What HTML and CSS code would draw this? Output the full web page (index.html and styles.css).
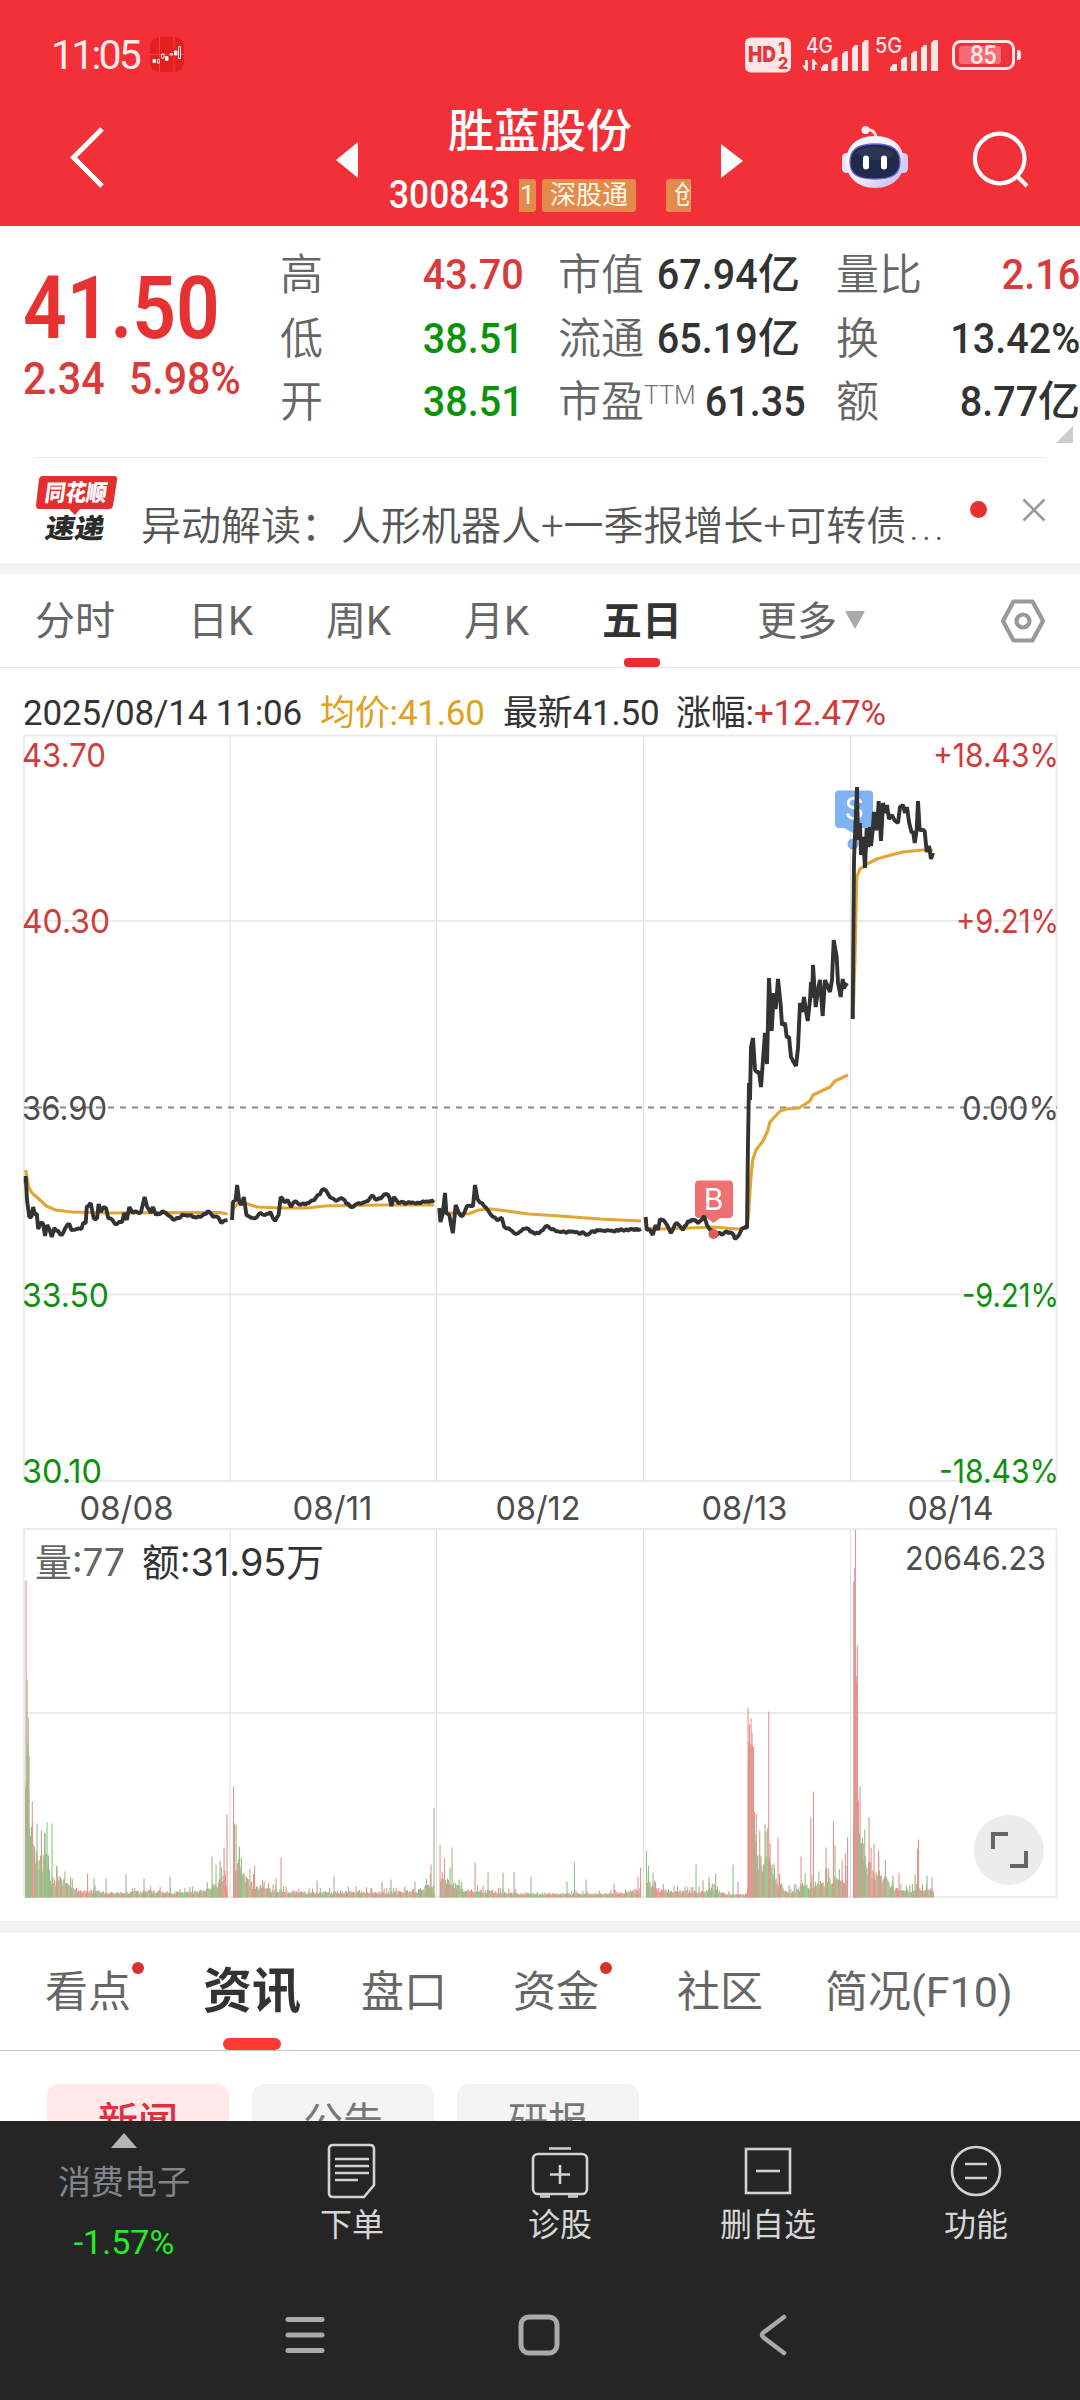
FILE: index.html
```html
<!DOCTYPE html>
<html lang="zh-CN">
<head>
<meta charset="UTF-8" />
<meta name="viewport" content="width=device-width, initial-scale=1" />
<title>胜蓝股份 300843</title>
<link rel="stylesheet" href="styles.css">
</head>
<body>

<header class="header">
  <div class="status">
    <span class="clock">11:05</span>
    <svg class="app-icon" width="34" height="35" viewBox="0 0 34 35">
      <rect width="34" height="35" rx="9" fill="#e3201f" />
      <path d="M9.500 0V35M0 17.500H34M24 0V35" stroke="#ef4a45" stroke-width="0.800" />
      <g fill="#fff" stroke="#fff" stroke-width="0.900">
        <path d="M3 22.500h2.500v3H3zM15.500 19.500h2.500v4h-2.500zM24.500 14h2.500v4h-2.500z" />
        <path d="M7.500 22.500h2v3.500h-2zM11.500 17h2.500v4h-2.500zM20 16.500h2.500v1.500H20zM28.500 9.500h2v12h-2z" fill="none" />
      </g>
    </svg>
    <svg class="signals" width="282" height="40" viewBox="742 34 282 40">
      <rect x="745" y="37.500" width="46" height="35" rx="6" fill="#ffe6e6" />
      <text x="748" y="62" class="hd" textLength="28" lengthAdjust="spacingAndGlyphs">HD</text>
      <text x="778" y="53.500" class="hd-small">1</text>
      <text x="778" y="68.500" class="hd-small">2</text>
      <g fill="#ffe6e6">
        <text x="806" y="53" class="net" textLength="27" lengthAdjust="spacingAndGlyphs">4G</text>
        <text x="875" y="53" class="net" textLength="27" lengthAdjust="spacingAndGlyphs">5G</text>
        <path d="M808 60v11h-1.500l-4.500-5.500h3V60zM812 70V59h1.500l4.500 5.500h-3V70z" />
        <path d="M821 71v-3l3-4h4v7zM831.500 71V60l4-3h2v14zM842 71V54l3-3h3v20zM852 71V48l3-3h3v26zM862 71V43l3-3h3.500v31z" />
        <path d="M890 71v-3l3-4h4v7zM901 71V60l3-3h3v14zM911 71V54l3-3h3v20zM921 71V48l3-3h3v26zM931 71V43l3-3h4v31z" />
        <path d="M1017 50h1.500q2.500 0 2.500 3v4q0 3-2.500 3H1017z" />
      </g>
      <rect x="953.500" y="41.500" width="60" height="27" rx="7" fill="none" stroke="#ffe6e6" stroke-width="3" />
      <rect x="959" y="46" width="42" height="18" rx="3" fill="#f66c72" />
      <text x="970" y="64" class="battery" textLength="27" lengthAdjust="spacingAndGlyphs">85</text>
    </svg>
  </div>
  <div class="nav">
    <svg class="back" width="40" height="66" viewBox="66 126 40 66"><path d="M101 131L72.500 159.500L101 188" fill="none" stroke="#fff" stroke-width="5" /></svg>
    <svg class="prev" width="22" height="36" viewBox="0 0 22 36"><path d="M22 0V36L0 18z" fill="#fff" /></svg>
    <div class="title">
      <h1>胜蓝股份</h1>
      <div class="code-row">
        <span class="code">300843</span>
        <div class="tags">
          <span class="tag cut-left">1</span>
          <span class="tag">深股通</span>
          <span class="tag cut-right">创</span>
        </div>
      </div>
    </div>
    <svg class="next" width="22" height="34" viewBox="0 0 22 34"><path d="M0 0V34L22 17z" fill="#fff" /></svg>
    <svg class="robot" width="70" height="66" viewBox="0 0 70 66">
      <defs>
        <linearGradient id="shell" x1="0" y1="0" x2="1" y2="1">
          <stop offset="0" stop-color="#fff" /><stop offset="0.500" stop-color="#f3effc" /><stop offset="1" stop-color="#bdb6e8" />
        </linearGradient>
      </defs>
      <path d="M25 6Q35 4 36 14" fill="none" stroke="#fbdde4" stroke-width="3" />
      <circle cx="25.500" cy="6" r="4" fill="#fbe9ef" />
      <rect x="2" y="29" width="9" height="20" rx="4.500" fill="#e9e4f8" />
      <rect x="58" y="29" width="10" height="20" rx="4.500" fill="#d4cdf2" />
      <path d="M35 12C55 12 64 24 64 38S53 64 35 64S6 52 6 38S15 12 35 12z" fill="url(#shell)" />
      <path d="M35 20C53 20 60 26 60 38S53 55 35 55S10 50 10 38S17 20 35 20z" fill="#202b4b" stroke="#6f62dd" stroke-width="1.300" />
      <path d="M16 29Q22 23 35 23.500Q50 24 54 30Q48 37 34 36Q24 35 16 29z" fill="#36405e" opacity="0.600" />
      <rect x="23" y="31.500" width="6" height="14" rx="3" fill="#fff" />
      <rect x="41" y="31.500" width="6" height="14" rx="3" fill="#fff" />
    </svg>
    <svg class="search" width="60" height="62" viewBox="970 130 60 62"><g fill="none" stroke="#fff" stroke-width="4.200"><circle cx="999.700" cy="160.500" r="24.800" /><path d="M1017 178l10 10" /></g></svg>
  </div>
</header>

<section class="quote">
  <div class="price">
    <div class="last"><span>41.50</span></div>
    <div class="change"><span>2.34</span><span>5.98%</span></div>
  </div>
  <dl class="col col-a">
    <div><dt>高</dt><dd class="up"><span class="num">43.70</span></dd></div>
    <div><dt>低</dt><dd class="down"><span class="num">38.51</span></dd></div>
    <div><dt>开</dt><dd class="down"><span class="num">38.51</span></dd></div>
  </dl>
  <dl class="col col-b">
    <div><dt>市值</dt><dd><span class="num">67.94</span>亿</dd></div>
    <div><dt>流通</dt><dd><span class="num">65.19</span>亿</dd></div>
    <div><dt>市盈<sup>TTM</sup></dt><dd><span class="num">61.35</span></dd></div>
  </dl>
  <dl class="col col-c">
    <div><dt>量比</dt><dd class="up"><span class="num">2.16</span></dd></div>
    <div><dt>换</dt><dd><span class="num">13.42%</span></dd></div>
    <div><dt>额</dt><dd><span class="num">8.77</span>亿</dd></div>
  </dl>
  <i class="corner"></i>
</section>

<section class="news">
  <svg class="logo" width="82" height="68" viewBox="36 476 82 68">
    <path d="M42 477H114q4 0 3 4L113 507q-1 3-4 3H80l-5 6l-6-6H39q-3 0-3-4L39 480q1-3 3-3z" fill="#e32f2f" />
    <text class="logo-top" transform="translate(44 502) skewX(-8)" textLength="62" lengthAdjust="spacingAndGlyphs">同花顺</text>
    <text class="logo-bottom" transform="translate(44 539) skewX(-10)" textLength="59" lengthAdjust="spacingAndGlyphs">速递</text>
  </svg>
  <p>异动解读：人形机器人+一季报增长+可转债<span class="more-dots">...</span></p>
  <i class="dot"></i>
  <svg class="close" width="24" height="24" viewBox="0 0 24 24"><path d="M1.500 1.500L22.500 22.500M22.500 1.500L1.500 22.500" stroke="#999" stroke-width="2.600" /></svg>
</section>

<nav class="periods">
  <a>分时</a><a>日K</a><a>周K</a><a>月K</a><a class="active">五日</a><a class="more">更多<i></i></a>
  <svg class="settings" width="46" height="44" viewBox="0 0 46 44"><g fill="none" stroke="#999" stroke-width="4.200"><path d="M13.500 2.500H32.500L43 22L32.500 41.500H13.500L3 22z" stroke-linejoin="round" /><circle cx="23" cy="22" r="6.500" /></g></svg>
</nav>

<section class="chart">
  <div class="readout">
    <span class="r-date">2025/08/14 11:06</span>
    <span class="r-avg">均价:41.60</span>
    <span class="r-last">最新41.50</span>
    <span class="r-chg">涨幅:<b>+12.47%</b></span>
  </div>
  <svg class="plot" width="1080" height="1187" viewBox="0 734 1080 1187">
    <g class="grid">
      <path d="M24 735.500H1057M24 921H1057M24 1294.500H1057M24 1481H1057M24 1529H1057M24 1713H1057M24 1897H1057" />
      <path d="M24 735V1481M1056.500 735V1481M24 1529V1897M1056.500 1529V1897" />
      <path class="thin" d="M230 735V1481M436.500 735V1481M643.500 735V1481M850.500 735V1481M230 1529V1897M436.500 1529V1897M643.500 1529V1897M850.500 1529V1897" />
    </g>
    <path d="M24 1107.500H1057" stroke="#8a8a8a" stroke-width="2" stroke-dasharray="6 6" />
    <g id="volume"></g>
    <g class="axis">
      <text x="22" y="767" class="up" textLength="84" lengthAdjust="spacingAndGlyphs">43.70</text>
      <text x="22" y="933" class="up" textLength="88" lengthAdjust="spacingAndGlyphs">40.30</text>
      <text x="22" y="1120" textLength="85" lengthAdjust="spacingAndGlyphs">36.90</text>
      <text x="22" y="1307" class="down" textLength="87" lengthAdjust="spacingAndGlyphs">33.50</text>
      <text x="22" y="1483" class="down" textLength="80" lengthAdjust="spacingAndGlyphs">30.10</text>
      <text x="933" y="767" class="up" textLength="126" lengthAdjust="spacingAndGlyphs">+18.43%</text>
      <text x="956" y="933" class="up" textLength="103" lengthAdjust="spacingAndGlyphs">+9.21%</text>
      <text x="962" y="1120" textLength="97" lengthAdjust="spacingAndGlyphs">0.00%</text>
      <text x="962" y="1307" class="down" textLength="97" lengthAdjust="spacingAndGlyphs">-9.21%</text>
      <text x="939" y="1483" class="down" textLength="120" lengthAdjust="spacingAndGlyphs">-18.43%</text>
      <text x="79.500" y="1520" textLength="94" lengthAdjust="spacingAndGlyphs">08/08</text>
      <text x="292.500" y="1520" textLength="80" lengthAdjust="spacingAndGlyphs">08/11</text>
      <text x="495.500" y="1520" textLength="85" lengthAdjust="spacingAndGlyphs">08/12</text>
      <text x="701.500" y="1520" textLength="86" lengthAdjust="spacingAndGlyphs">08/13</text>
      <text x="907.500" y="1520" textLength="86" lengthAdjust="spacingAndGlyphs">08/14</text>
      <text x="905" y="1570" textLength="141" lengthAdjust="spacingAndGlyphs">20646.23</text>
    </g>
    <g class="vol-text">
      <text x="35" y="1576" fill="#666" textLength="90" lengthAdjust="spacingAndGlyphs">量:77</text>
      <text x="142" y="1576" fill="#333" textLength="182" lengthAdjust="spacingAndGlyphs">额:31.95万</text>
    </g>
    <g class="marker sell">
      <path d="M839 790.500H869q4 0 4 4V824q0 4-4 4H861L853 833L844 828H839q-4 0-4-4V794.500q0-4 4-4z" />
      <circle cx="853" cy="844" r="5.500" />
      <text x="854" y="819">S</text>
    </g>
    <g class="marker buy">
      <path d="M699 1180.500H729q4 0 4 4V1214q0 4-4 4H720L713.500 1223L707 1218H699q-4 0-4-4V1184.500q0-4 4-4z" />
      <text x="713.500" y="1210">B</text>
    </g>
    <g id="lines"></g>
    <circle cx="713.500" cy="1234" r="5" fill="#e05a5a" />
    <circle cx="1008.700" cy="1850" r="35" fill="#ececec" />
    <path d="M993 1849V1834H1008M1026 1851V1866H1010" fill="none" stroke="#666" stroke-width="4" />
  </svg>
</section>

<nav class="sections">
  <a>看点<i></i></a><a class="active">资讯</a><a>盘口</a><a>资金<i></i></a><a>社区</a><a>简况(F10)</a>
</nav>

<section class="chips">
  <span class="chip on">新闻</span><span class="chip">公告</span><span class="chip">研报</span>
</section>

<footer class="bottom">
  <div class="toolbar">
    <div class="tool sector">
      <svg width="26" height="15" viewBox="0 0 26 15"><path d="M13 0L26 15H0z" fill="#b5b5b5" /></svg>
      <span class="sector-name">消费电子</span>
      <span class="sector-chg">-1.57%</span>
    </div>
    <div class="tool">
      <svg width="60" height="56" viewBox="0 0 60 56"><g fill="none" stroke="#d2d2d2" stroke-width="2.600"><path d="M11 2H48q4 0 4 4V42L42 54H11q-4 0-4-4V6q0-4 4-4z" /><path d="M13 16H47M13 23H47M13 30H47M13 37H36" /></g></svg>
      <span>下单</span>
    </div>
    <div class="tool">
      <svg width="60" height="56" viewBox="0 0 60 56"><g fill="none" stroke="#d2d2d2" stroke-width="2.600"><rect x="3" y="11" width="54" height="40" rx="5" /><path d="M19 5.500H41M30 22V41M20 31.500H40M10 53.500H20M38 53.500H48" /></g></svg>
      <span>诊股</span>
    </div>
    <div class="tool">
      <svg width="60" height="56" viewBox="0 0 60 56"><g fill="none" stroke="#d2d2d2" stroke-width="2.600"><rect x="8" y="6" width="44" height="44" /><path d="M18 28H42" /></g></svg>
      <span>删自选</span>
    </div>
    <div class="tool">
      <svg width="60" height="56" viewBox="0 0 60 56"><g fill="none" stroke="#d2d2d2" stroke-width="2.600"><circle cx="30" cy="28" r="24" /><path d="M19 21H41M19 35H41" /></g></svg>
      <span>功能</span>
    </div>
  </div>
  <div class="sysnav">
    <svg width="42" height="42" viewBox="0 0 42 42"><path d="M4 5.500H38M4 21H38M4 36.500H38" stroke="#aaa" stroke-width="5" stroke-linecap="round" /></svg>
    <svg width="42" height="42" viewBox="0 0 42 42"><rect x="3" y="3" width="36" height="36" rx="8" fill="none" stroke="#aaa" stroke-width="5" /></svg>
    <svg width="42" height="42" viewBox="0 0 42 42"><path d="M32 3L11.500 18.500Q8.500 21 11.500 23.500L32 39" fill="none" stroke="#aaa" stroke-width="4.500" stroke-linecap="round" /></svg>
  </div>
</footer>

<script>
  const NS = 'http://www.w3.org/2000/svg';
  const lines = document.getElementById('lines');
  const volume = document.getElementById('volume');

  // one string per trading day
  const avgDays = [
    '25.7,1170 28.6,1187 32,1193 40,1200 46.4,1206 55.4,1210 71.4,1212 107,1213 178.6,1212.7 221,1212.7 227.5,1214',
    '232,1210 237.5,1204 244.6,1203 257,1207 282,1208 307,1208 325,1206 378.6,1205 434,1205',
    '439,1213 452,1213 468,1214 478.6,1210 491,1209 507,1211 528.6,1214 560,1216 600,1219 641,1221',
    '646,1228 660,1229 690,1228 713,1227 737,1229 747,1228 748.7,1213 750.7,1180 752.7,1160 756,1150 763,1141 768,1130 770,1122 780,1111 786.7,1109 799,1108 810,1101 813,1095 830,1087 835,1081 848,1075',
    '853,1019 855,957 856.7,877 860,869 867,864 877,859 887,856 903,852 923,850 933,850'
  ];
  const priceDays = [
    '25.7,1183 25.7,1176 27,1200 29.3,1217 31.4,1217 33.2,1207 34.6,1214 36.8,1214 38.2,1229 40.4,1223 42.9,1223 45,1236 47.1,1225 51.8,1237 54.3,1228 58.2,1231 61.8,1235 65.4,1228 69.3,1224 71.4,1230 76.8,1229 81.4,1229 83.2,1223 85.7,1223 86.8,1207 90.7,1203 93.6,1218 97.1,1218 98.6,1204 100.7,1212 103.6,1207 106,1208 108.2,1218 112.5,1220 115,1224 118.9,1222 122.1,1222 124.3,1213 126.8,1220 129.3,1207 132.9,1213 141,1212 144.6,1197 147.1,1207 150.7,1213 152.9,1207 156,1215 162.5,1211 167.9,1215 173.2,1220 178.6,1218 183.9,1215 192.9,1217 200,1217 207.9,1211 213.2,1217 218.6,1218 221.4,1223 227.5,1220',
    '232.1,1220 232.9,1202 235.7,1200 237.1,1185 239.3,1202 241.4,1205 243.9,1197 246.4,1215 250,1217 257,1217 260.7,1213 265,1215 270.4,1212 275,1221 278.6,1215 280.7,1197 284,1202 287.5,1200 291,1207 295.7,1201 300,1205 307,1203 314.3,1200 317.9,1195 323.9,1189 328.6,1195 335.7,1201 341,1198 351.8,1207 359,1203 367.9,1201 371.4,1196 376.8,1200 385.7,1194 389.3,1197 391.4,1206 393.9,1197 398.2,1203 410.7,1203 425,1202 434,1200',
    '439.3,1208 440.4,1222 442.9,1213 445,1193 446.4,1213 449.3,1215 452.9,1233 455.7,1205 458.9,1213 462.5,1216 467,1206 473,1206 475,1185 477.5,1199 482,1203 486.4,1208 491,1215 497,1220 501.8,1218 504.3,1227 510.7,1230 516,1234 523,1229 528.6,1229 534.6,1234 541,1231 546.4,1226 553.6,1229 560,1232 570,1232 585,1234 600,1230 620,1230 641,1229',
    '645.7,1217 646.7,1230 650,1230 652.7,1235 655.7,1225 658,1230 660,1219 665,1222 670.7,1233 676.7,1223 683,1230 688,1221 695,1220 698,1223 704,1216 707,1225 710,1230 716.7,1235 725,1232 731.7,1233 735,1239 739,1235 741.7,1229 747,1228 748,1143 749,1083 750,1100 751,1047 753,1038 755,1070 759,1072 761,1087 763,1060 765,1033 767,1064 769,978 771.7,1031 773.7,993 775.7,1009 778,979 780.7,1005 782,1025 785,1023 786.7,1037 789,1037 791,1057 796,1066 798,1048 800,1003 802,1012 804,997 807.7,1021 810,1000 811,982 812,998 813,965 815.7,1007 818,990 820,980 822.7,1016 825,980 828,987 830,992 832,980 833.7,940 836.7,957 838,983 840.7,997 842.7,979 844,988 847,983',
    '852.7,1019 854,860 857,787 858,840 860,823 861,855 863,837 865,868 866.7,828 868,847 870,827 871,846 872.7,830 874,812 876,830 877,828 878.7,801 881,841 883,803 885,813 887,805 889,819 892,815 895,821 898,823 900,807 903,805 905,813 907,807 909,822 911.7,833 913,831 914.7,843 916.7,830 918,801 919.7,830 924.7,831 926.7,852 929,846 931,859 933,853'
  ];

  let seed = 843;
  function rand() {
    seed = (seed * 16807) % 2147483647;
    return seed / 2147483647;
  }

  function parse(s) {
    return s.split(' ').map(p => p.split(',').map(Number));
  }

  // minute ticks between the turning points
  function ticks(pts) {
    const out = [pts[0]];
    for (let i = 1; i < pts.length; i++) {
      const [x0, y0] = pts[i - 1];
      const [x1, y1] = pts[i];
      const n = Math.floor((x1 - x0) / 1.6);
      for (let k = 1; k < n; k++) {
        const t = k / n;
        out.push([x0 + (x1 - x0) * t, y0 + (y1 - y0) * t + (rand() - 0.5) * 3]);
      }
      out.push(pts[i]);
    }
    return out;
  }

  function addLine(pts, color, width) {
    const el = document.createElementNS(NS, 'polyline');
    el.setAttribute('points', pts.map(p => p.join(',')).join(' '));
    el.setAttribute('fill', 'none');
    el.setAttribute('stroke', color);
    el.setAttribute('stroke-width', width);
    el.setAttribute('stroke-linejoin', 'bevel');
    lines.appendChild(el);
  }

  avgDays.forEach(d => addLine(parse(d), '#e3a634', 3.2));
  priceDays.forEach(d => addLine(ticks(parse(d)), '#333', 3.9));

  // usual bar height along x, then the spikes as x,height,colour
  const base = [
    '25,150 28,150 30,65 34,45 40,40 44,38 48,35 50,20 60,18 70,12 80,7 95,7 110,5 130,5 145,7 180,5 205,8 212,12 220,16 225,26 227,3',
    '233,40 237,38 240,24 246,20 255,12 270,8 300,5 340,6 360,7 375,5 400,6 420,8 428,12 433,18 434,2',
    '440,25 447,17 456,12 465,7 480,7 510,5 560,4 600,4 625,5 636,8 640,4',
    '646,16 655,9 670,7 695,6 710,9 725,4 745,3 747,8 748,155 753,150 754,75 756,45 762,35 768,42 773,28 779,14 786,7 798,8 802,16 808,12 820,16 832,18 842,16 847,20',
    '853,75 854,250 857,200 858,80 861,70 863,45 868,35 873,24 884,24 890,10 905,7 915,8 925,8 933,8'
  ];
  const spikes = '26,317,r 27,218,g 28,154,g 29,142,g 32.4,75,r 37,74,g 45,65,g 47,75,g 52,74,g 57,30,g 87.5,24,r 94,19,g 106,19,g 126,23,g 144,19,r 170,21,g 212,41,g 216,33,g 220,37,g 224,50,r 227,83,r 233.5,111,r 234.5,74,r 236,73,g 239.5,49,g 254.5,32,r 276,19,g 281,40,r 317,17,r 334,21,n 382,16,r 391,18,g 415,16,g 431,33,r 434,89,g 440,53,r 444.5,39,r 450,30,g 452,50,g 475,35,r 488,25,g 503,25,g 514,25,g 531,21,g 567,16,g 574.4,35,g 586,18,g 614,14,r 638,21,r 640.5,30,r 646.4,47,g 648.5,32,g 653,25,g 696,33,g 703,17,r 709,21,g 715.6,24,n 733,33,g 738,16,r 748,190,r 749.4,173,r 751,179,r 752,165,r 753,151,r 754,79,g 756,63,g 759.7,67,r 765,73,g 768.7,186,r 770,54,r 774,34,g 778,60,r 801,41,r 810.7,80,r 813.4,106,r 826,50,r 833.4,76,r 835,52,g 842,37,r 845.4,44,r 847.5,60,n 853.7,316,r 854.7,329,r 855.4,368,r 856.5,215,r 857.3,252,r 858,81,g 860,111,r 864.7,68,g 869,80,r 874,54,r 878.5,47,r 893,22,g 899,25,r 915,23,g 917.4,49,r 918.5,58,r 927,22,g 932,20,r';
  const barColor = { r: '#e59490', g: '#93c086', n: '#aaa' };

  function addBar(x, h, color) {
    const el = document.createElementNS(NS, 'rect');
    el.setAttribute('x', x.toFixed(2));
    el.setAttribute('y', 1897.5 - h);
    el.setAttribute('width', 1.1);
    el.setAttribute('height', h);
    el.setAttribute('fill', color);
    volume.appendChild(el);
  }

  base.forEach((day, d) => {
    const pts = parse(day);
    for (let i = 1; i < pts.length; i++) {
      const [x0, h0] = pts[i - 1];
      const [x1, h1] = pts[i];
      for (let x = x0; x < x1; x += 0.86) {
        const h = h0 + (h1 - h0) * (x - x0) / (x1 - x0);
        const hot = (d === 3 && x > 747 && x < 754) || (d === 4 && x < 858);
        const color = rand() < (hot ? 0.85 : 0.47) ? barColor.r : barColor.g;
        const jump = rand() < 0.1 ? 1.7 : 0.6 + rand() * 0.6;
        addBar(x, Math.max(2, h * (hot ? 1 : jump)), color);
      }
    }
  });
  spikes.split(' ').forEach(s => {
    const [x, h, c] = s.split(',');
    addBar(Number(x) - 0.5, Number(h), barColor[c]);
  });
</script>

</body>
</html>
```
FILE: styles.css
```css
* {
  box-sizing: border-box;
}
body {
  margin: 0;
  width: 1080px;
  height: 2400px;
  overflow: hidden;
  background: #fff;
  color: #333;
  font-family: Roboto, "Noto Sans CJK SC", sans-serif;
}
svg {
  display: block;
  flex: none;
}
h1, p, dl, dd {
  margin: 0;
}
.up {
  color: #d93a3a;
  fill: #d03c3c;
}
.down {
  color: #0b930b;
  fill: #0f8f0f;
}

/* header */
.header {
  height: 226px;
  background: #f23038;
  color: #fff;
}
.status {
  display: flex;
  align-items: center;
  height: 108px;
  padding: 0 56px 0 51px;
}
.clock {
  width: 99px;
  padding-top: 2px;
  font-size: 41px;
  line-height: 40px;
  letter-spacing: -2.8px;
  color: #ffe9e9;
}
.signals {
  margin-left: auto;
}
.hd {
  font: 900 22px Inter, sans-serif;
  fill: #e03a40;
}
.hd-small {
  font: 800 16px Inter, sans-serif;
  fill: #e03a40;
}
.net {
  font: 500 21px Inter, sans-serif;
}
.battery {
  font: 600 25px Inter, sans-serif;
  fill: #ffe6e6;
}
.nav {
  display: flex;
  height: 118px;
}
.back {
  margin: 16px 0 0 67px;
}
.prev {
  margin: 34px 0 0 229px;
}
.title {
  width: 335px;
  margin-left: 14px;
  padding-left: 17px;
}
.title h1 {
  height: 62px;
  margin-top: -8px;
  padding-left: 59px;
  font-size: 46px;
  line-height: 62px;
  font-weight: 500;
}
.code-row {
  display: flex;
  align-items: center;
  height: 34px;
  margin-top: 16px;
}
.code {
  width: 130px;
  font-size: 38px;
  line-height: 34px;
  font-weight: 500;
  transform: scaleX(0.93);
  transform-origin: left;
}
.tags {
  display: flex;
  gap: 6px;
  width: 172px;
  overflow: hidden;
}
.tag {
  flex: none;
  height: 33px;
  padding: 0 8px;
  border-radius: 3px;
  background: #e38b4b;
  color: #fff6e6;
  font-size: 26px;
  line-height: 33px;
}
.tag.cut-left {
  width: 17px;
  padding: 0 1px;
  border-radius: 0 3px 3px 0;
}
.tag.cut-right {
  margin-left: 24px;
}
.next {
  margin: 36px 0 0 14px;
}
.robot {
  margin: 16px 0 0 97px;
}
.search {
  margin: 20px 0 0 60px;
}

/* quote */
.quote {
  position: relative;
  display: flex;
  height: 232px;
  padding-top: 17px;
}
.quote::after {
  content: "";
  position: absolute;
  left: 35px;
  right: 35px;
  bottom: 0;
  height: 1px;
  background: #e8e8e8;
}
.price {
  width: 280px;
  padding-left: 23px;
  color: #e63232;
  font-weight: 500;
}
.last {
  height: 84px;
  margin-top: 23px;
  font-size: 88px;
  font-weight: 600;
  line-height: 84px;
}
.last span {
  display: inline-block;
  transform: scaleX(0.87);
  transform-origin: left;
}
.change {
  display: flex;
  gap: 26px;
  height: 50px;
  margin-top: 4px;
  color: #d93a3a;
  font-size: 44px;
  line-height: 50px;
  transform: scaleX(0.935);
  transform-origin: left;
}
.col div {
  display: flex;
  justify-content: space-between;
  height: 63.7px;
  line-height: 64px;
}
.col dt {
  color: #666;
  font-size: 43px;
  font-weight: 350;
  white-space: nowrap;
}
.col dd {
  margin-top: -1px;
  font-size: 42px;
  font-weight: 500;
  white-space: nowrap;
}
.col sup {
  display: inline-block;
  font-size: 25px;
  line-height: 20px;
  vertical-align: 13px;
  color: #777;
}
.num {
  display: inline-block;
  font-size: 43px;
  transform: scaleX(0.92);
  transform-origin: right;
}
.col-a {
  width: 244px;
}
.col-b {
  width: 242px;
  margin-left: 34px;
}
.col-c {
  width: 244px;
  margin-left: 36px;
}
.corner {
  position: absolute;
  right: 7px;
  bottom: 15px;
  border-left: 17px solid transparent;
  border-bottom: 17px solid #ccc;
}

/* news strip */
.news {
  display: flex;
  height: 116px;
  padding-left: 36px;
  border-bottom: 11px solid #f4f4f4;
}
.logo {
  margin-top: 17px;
}
.logo-top {
  font: 900 23px "Noto Sans CJK SC", sans-serif;
  fill: #fff;
}
.logo-bottom {
  font: 900 27px "Noto Sans CJK SC", sans-serif;
  fill: #2c2c2c;
}
.news p {
  width: 811px;
  margin: 40px 0 0 23px;
  color: #555;
  font-size: 40px;
  line-height: 58px;
  font-weight: 350;
  white-space: nowrap;
}
.more-dots {
  margin-left: 3px;
  letter-spacing: 3px;
}
.dot {
  width: 17px;
  height: 17px;
  margin: 43px 0 0 18px;
  border-radius: 50%;
  background: #e83030;
}
.close {
  margin: 40px 0 0 35px;
}

/* period tabs */
.periods {
  display: flex;
  height: 94px;
  padding-left: 35px;
  border-bottom: 1px solid #e6e6e6;
}
.periods a {
  position: relative;
  width: 138px;
  height: 93px;
  font-size: 40px;
  line-height: 96px;
  color: #666;
  white-space: nowrap;
}
.periods a:nth-child(1) {
  width: 153px;
}
.periods .active {
  width: 155px;
  color: #333;
  font-weight: 700;
}
.periods .active::after {
  content: "";
  position: absolute;
  left: 22px;
  bottom: 0;
  width: 36px;
  height: 9px;
  border-radius: 4px;
  background: #e63030;
}
.periods .more {
  width: 243px;
}
.more i {
  display: inline-block;
  margin-left: 8px;
  border: 10px solid transparent;
  border-top: 18px solid #aaa;
  border-bottom: 0;
  vertical-align: 6px;
}
.settings {
  margin-top: 25px;
}

/* chart */
.chart {
  height: 1253px;
}
.readout {
  display: flex;
  height: 66px;
  padding-left: 23px;
  font: 400 35px/92px Roboto, "Noto Sans CJK SC", sans-serif;
  white-space: nowrap;
  letter-spacing: -0.2px;
}
.readout span {
  flex: none;
}
.r-date {
  width: 297px;
}
.r-avg {
  width: 183px;
  color: #e0a020;
}
.r-last {
  width: 173px;
}
.r-chg b {
  font-weight: 400;
  color: #d03a3a;
}
.grid path {
  fill: none;
  stroke: #ebebeb;
  stroke-width: 2;
}
.grid .thin {
  stroke: #dedede;
  stroke-width: 1;
}
.axis text {
  font: 400 33px Inter, sans-serif;
}
.axis {
  fill: #4d4d4d;
}
.vol-text text {
  font: 400 38px Inter, "Noto Sans CJK SC", sans-serif;
}
.marker text {
  font: 400 30px Inter, sans-serif;
  fill: #fff;
  text-anchor: middle;
}
.sell {
  fill: #7fb2f0;
}
.buy {
  fill: #ef7070;
}

/* section tabs */
.sections {
  display: flex;
  height: 130px;
  padding-left: 45px;
  border-top: 12px solid #f4f4f4;
  border-bottom: 1px solid #c8c8c8;
}
.sections a {
  position: relative;
  width: 164px;
  font-size: 43px;
  line-height: 118px;
  color: #666;
  white-space: nowrap;
}
.sections a:nth-child(1) {
  width: 158px;
}
.sections a:nth-child(3) {
  width: 152px;
}
.sections a:nth-child(5) {
  width: 148px;
}
.sections .active {
  width: 158px;
  font-size: 49px;
  font-weight: 700;
  color: #333;
}
.sections .active::after {
  content: "";
  position: absolute;
  left: 20px;
  bottom: 0;
  width: 58px;
  height: 12px;
  border-radius: 6px;
  background: #fc3b32;
}
.sections i {
  position: absolute;
  left: 87px;
  top: 29px;
  width: 12px;
  height: 12px;
  border-radius: 50%;
  background: #d93030;
}

/* chips */
.chips {
  display: flex;
  gap: 23px;
  height: 70px;
  padding: 33px 0 0 47px;
  overflow: hidden;
}
.chip {
  width: 182px;
  height: 78px;
  flex: none;
  border-radius: 12px;
  background: #f4f4f4;
  color: #777;
  font-size: 40px;
  line-height: 78px;
  text-align: center;
}
.chip.on {
  background: #ffe9ea;
  color: #e03040;
  font-weight: 500;
}

/* bottom bars */
.bottom {
  height: 279px;
  background: #252525;
  color: #d6d6d6;
}
.toolbar {
  display: grid;
  grid-template-columns: 248px repeat(4, 208px);
  height: 193px;
}
.tool {
  display: flex;
  flex-direction: column;
  align-items: center;
  padding-top: 22px;
  font-size: 32px;
  line-height: 52px;
}
.sector {
  padding-top: 12px;
}
.sector-name {
  margin-top: 9px;
  color: #81868b;
  font-size: 33px;
}
.sector-chg {
  margin-top: 7px;
  font-size: 34px;
  color: #23ee20;
}
.sysnav {
  display: flex;
  justify-content: center;
  gap: 192px;
  padding-right: 2px;
}
```
